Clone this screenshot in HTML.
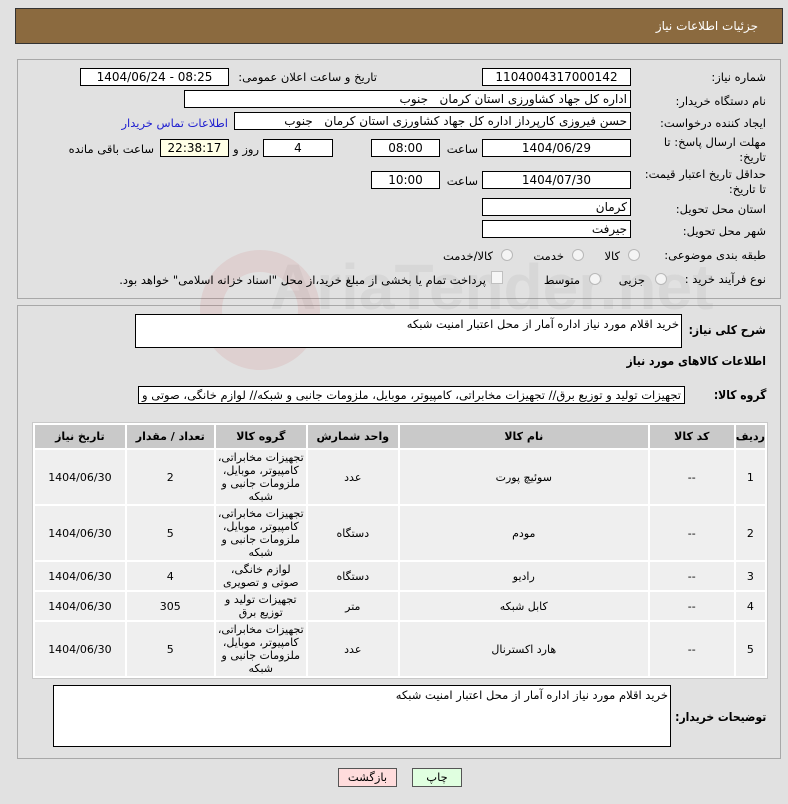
<!DOCTYPE html>
<html><head><meta charset="utf-8">
<style>
*{box-sizing:border-box;margin:0;padding:0}
body{width:788px;height:804px;background:#e1e1e1;font-family:"DejaVu Sans","Liberation Sans",sans-serif;font-size:11px;color:#000;position:relative;overflow:hidden}
.a{position:absolute;white-space:nowrap}
.box{position:absolute;background:#fff;border:1px solid #000;height:18px;line-height:16px;text-align:center;font-size:12px}
.l{position:absolute;direction:rtl;white-space:nowrap;font-size:11.5px;z-index:2}
.b{font-weight:bold;transform:scaleX(0.9);transform-origin:right center}
.rad{position:absolute;width:12px;height:12px;border-radius:50%;border:1px solid #b8b8b8;background:#f4f4f4}
table{position:absolute;left:32px;top:422px;width:736px;border-collapse:separate;border-spacing:2px;background:#fff;border:1px solid #c8c8c8;direction:rtl}
th{background:#c9c9c9;height:23px;font-size:11px;font-weight:bold}
td{background:#efefef;text-align:center;font-size:11px;line-height:13px}
</style></head><body>
<div class="a" style="left:15px;top:8px;width:768px;height:36px;background:#8b6a3f;border:1px solid #333"></div>
<div class="l" style="right:30px;top:19px;color:#fff;font-size:12px">جزئیات اطلاعات نیاز</div>
<div class="a" style="left:17px;top:59px;width:764px;height:240px;border:1px solid #a8a8a8"></div>
<div class="a" style="left:17px;top:305px;width:764px;height:454px;border:1px solid #a8a8a8"></div>
<div class="a" style="left:270px;top:250px;font-size:64px;font-weight:bold;color:rgba(120,120,120,0.09);font-family:'Liberation Sans',sans-serif">AriaTender.net</div>
<div class="a" style="left:200px;top:250px;width:120px;height:120px;border-radius:50%;border:22px solid rgba(200,60,60,0.10)"></div>

<div class="l" style="right:22px;top:70px">شماره نیاز:</div>
<div class="box" style="left:482px;top:68px;width:149px">1104004317000142</div>
<div class="l" style="right:411px;top:70px">تاریخ و ساعت اعلان عمومی:</div>
<div class="box" style="left:80px;top:68px;width:149px">1404/06/24 - 08:25</div>

<div class="l" style="right:22px;top:94px">نام دستگاه خریدار:</div>
<div class="box" style="left:184px;top:90px;width:447px;text-align:right;direction:rtl;padding-right:3px">اداره کل جهاد کشاورزی استان کرمان &nbsp; جنوب</div>

<div class="l" style="right:22px;top:116px">ایجاد کننده درخواست:</div>
<div class="box" style="left:234px;top:112px;width:397px;text-align:right;direction:rtl;padding-right:3px">حسن فیروزی کارپرداز اداره کل جهاد کشاورزی استان کرمان &nbsp; جنوب</div>
<div class="l" style="right:560px;top:116px;color:#2020d0">اطلاعات تماس خریدار</div>

<div class="l" style="right:22px;top:135px;line-height:15px;text-align:right">مهلت ارسال پاسخ: تا<br>تاریخ:</div>
<div class="box" style="left:482px;top:139px;width:149px">1404/06/29</div>
<div class="l" style="right:310px;top:142px">ساعت</div>
<div class="box" style="left:371px;top:139px;width:69px">08:00</div>
<div class="box" style="left:263px;top:139px;width:70px">4</div>
<div class="l" style="right:529px;top:142px">روز و</div>
<div class="box" style="left:160px;top:139px;width:69px;background:#ffffe6">22:38:17</div>
<div class="l" style="right:634px;top:142px">ساعت باقی مانده</div>

<div class="l" style="right:22px;top:167px;line-height:15px;text-align:right">حداقل تاریخ اعتبار قیمت:<br>تا تاریخ:</div>
<div class="box" style="left:482px;top:171px;width:149px">1404/07/30</div>
<div class="l" style="right:310px;top:174px">ساعت</div>
<div class="box" style="left:371px;top:171px;width:69px">10:00</div>

<div class="l" style="right:22px;top:202px">استان محل تحویل:</div>
<div class="box" style="left:482px;top:198px;width:149px;text-align:right;padding-right:3px">کرمان</div>
<div class="l" style="right:22px;top:224px">شهر محل تحویل:</div>
<div class="box" style="left:482px;top:220px;width:149px;text-align:right;padding-right:3px">جیرفت</div>

<div class="l" style="right:22px;top:248px">طبقه بندی موضوعی:</div>
<div class="rad" style="left:628px;top:249px"></div><div class="l" style="right:168px;top:249px">کالا</div>
<div class="rad" style="left:572px;top:249px"></div><div class="l" style="right:224px;top:249px">خدمت</div>
<div class="rad" style="left:501px;top:249px"></div><div class="l" style="right:295px;top:249px">کالا/خدمت</div>

<div class="l" style="right:22px;top:272px">نوع فرآیند خرید :</div>
<div class="rad" style="left:655px;top:273px"></div><div class="l" style="right:143px;top:273px">جزیی</div>
<div class="rad" style="left:589px;top:273px"></div><div class="l" style="right:208px;top:273px">متوسط</div>
<div class="a" style="left:491px;top:271px;width:12px;height:13px;border:1px solid #c0c0c0;background:#f6f6f6"></div>
<div class="l" style="right:302px;top:273px">پرداخت تمام یا بخشی از مبلغ خرید،از محل "اسناد خزانه اسلامی" خواهد بود.</div>

<div class="l b" style="right:22px;top:323px;font-size:12px">شرح کلی نیاز:</div>
<div class="a" style="left:135px;top:314px;width:547px;height:34px;background:#fff;border:1px solid #000;direction:rtl;text-align:right;padding:2px 2px;font-size:11.5px">خرید اقلام مورد نیاز اداره آمار از محل اعتبار امنیت شبکه</div>
<div class="l b" style="right:22px;top:354px;font-size:12px">اطلاعات کالاهای مورد نیاز</div>
<div class="l b" style="right:22px;top:388px;font-size:12px">گروه کالا:</div>
<div class="a" style="left:138px;top:386px;width:547px;height:18px;background:#fff;border:1px solid #000;direction:rtl;overflow:hidden;padding-right:3px;font-size:11.5px;line-height:16px">تجهیزات تولید و توزیع برق// تجهیزات مخابراتی، کامپیوتر، موبایل، ملزومات جانبی و شبکه// لوازم خانگی، صوتی و تصویری</div>

<table>
<tr><th style="width:28px">ردیف</th><th style="width:84px">کد کالا</th><th style="width:248px">نام کالا</th><th style="width:90px">واحد شمارش</th><th style="width:90px">گروه کالا</th><th style="width:87px">تعداد / مقدار</th><th>تاریخ نیاز</th></tr>
<tr style="height:54px"><td>1</td><td>--</td><td>سوئیچ پورت</td><td>عدد</td><td>تجهیزات مخابراتی، کامپیوتر، موبایل، ملزومات جانبی و شبکه</td><td>2</td><td>1404/06/30</td></tr>
<tr style="height:54px"><td>2</td><td>--</td><td>مودم</td><td>دستگاه</td><td>تجهیزات مخابراتی، کامپیوتر، موبایل، ملزومات جانبی و شبکه</td><td>5</td><td>1404/06/30</td></tr>
<tr style="height:28px"><td>3</td><td>--</td><td>رادیو</td><td>دستگاه</td><td>لوازم خانگی، صوتی و تصویری</td><td>4</td><td>1404/06/30</td></tr>
<tr style="height:28px"><td>4</td><td>--</td><td>کابل شبکه</td><td>متر</td><td>تجهیزات تولید و توزیع برق</td><td>305</td><td>1404/06/30</td></tr>
<tr style="height:54px"><td>5</td><td>--</td><td>هارد اکسترنال</td><td>عدد</td><td>تجهیزات مخابراتی، کامپیوتر، موبایل، ملزومات جانبی و شبکه</td><td>5</td><td>1404/06/30</td></tr>
</table>

<div class="l b" style="right:22px;top:710px;font-size:12px">توضیحات خریدار:</div>
<div class="a" style="left:53px;top:685px;width:618px;height:62px;background:#fff;border:1px solid #000;direction:rtl;text-align:right;padding:2px;font-size:11.5px">خرید اقلام مورد نیاز اداره آمار از محل اعتبار امنیت شبکه</div>

<div class="a" style="left:338px;top:768px;width:59px;height:19px;background:#ffdcdc;border:1px solid #555;text-align:center;line-height:17px;font-size:11.5px">بازگشت</div>
<div class="a" style="left:412px;top:768px;width:50px;height:19px;background:#e0ffe0;border:1px solid #555;text-align:center;line-height:17px;font-size:11.5px">چاپ</div>
</body></html>
